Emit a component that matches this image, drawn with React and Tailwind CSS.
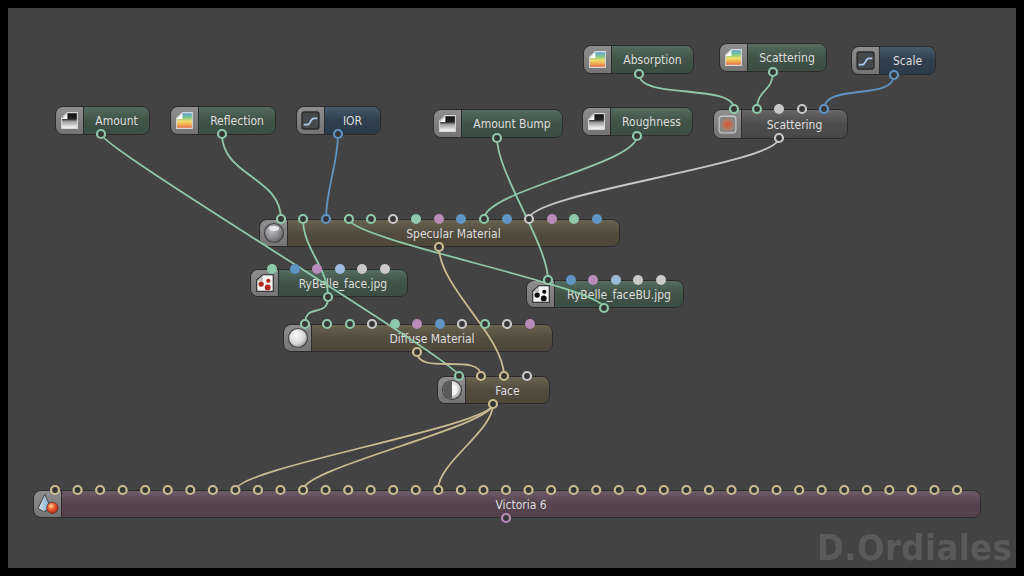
const bodies = {
  green: "bg-gradient-to-b from-[#566c60] via-[#3f5347] via-50% to-[#3c4e44]",
  blue: "bg-gradient-to-b from-[#465a6b] via-[#2f3f4e] via-50% to-[#2c3b48]",
  brown: "bg-gradient-to-b from-[#68634f] via-[#514c3e] via-50% to-[#4c4739]",
  gray: "bg-gradient-to-b from-[#666666] via-[#4d4d4d] via-50% to-[#484848]",
  mauve: "bg-gradient-to-b from-[#6d5b67] via-[#55424c] via-50% to-[#54414b]",
};

const nodes = [
  { label: "Amount", x: 55, y: 106, w: 95, h: 29, color: "green", icon: "gray" },
  { label: "Reflection", x: 170, y: 106, w: 106, h: 29, color: "green", icon: "rainbow" },
  { label: "IOR", x: 296, y: 106, w: 85, h: 29, color: "blue", icon: "curve" },
  { label: "Absorption", x: 583, y: 45, w: 111, h: 29, color: "green", icon: "rainbow" },
  { label: "Scattering", x: 719, y: 43, w: 108, h: 29, color: "green", icon: "rainbow" },
  { label: "Scale", x: 851, y: 46, w: 85, h: 29, color: "blue", icon: "curve" },
  { label: "Amount Bump", x: 433, y: 109, w: 130, h: 29, color: "green", icon: "gray" },
  { label: "Roughness", x: 582, y: 107, w: 111, h: 29, color: "green", icon: "gray" },
  { label: "Scattering", x: 713, y: 109, w: 135, h: 30, color: "gray", icon: "volume" },
  { label: "Specular Material", x: 259, y: 219, w: 361, h: 28, color: "brown", icon: "glossy" },
  { label: "RyBelle_face.jpg", x: 250, y: 269, w: 158, h: 28, color: "green", icon: "redmap" },
  { label: "RyBelle_faceBU.jpg", x: 526, y: 280, w: 158, h: 28, color: "green", icon: "blackmap" },
  { label: "Diffuse Material", x: 283, y: 324, w: 270, h: 28, color: "brown", icon: "diffuse" },
  { label: "Face", x: 437, y: 376, w: 113, h: 28, color: "brown", icon: "mix" },
  { label: "Victoria 6", x: 33, y: 490, w: 948, h: 28, color: "mauve", icon: "figure" },
];

const colors = {
  g: "#8fc9a9",
  b: "#5f94c4",
  p: "#b98bb9",
  l: "#9dbbdd",
  w: "#c9c9c9",
  t: "#cbbd90",
};

// [x, y, colour, filled]
const ring = (y, list) => list.map(([x, c]) => [x, y, c, false]);
const dot = (y, list) => list.map(([x, c]) => [x, y, c, true]);

const victoriaPorts = Array.from({ length: 41 }, (_, i) => [55 + i * 22.55, 490, "t", false]);

const ports = [
  ...ring(134, [[101, "g"], [222, "g"], [338, "b"]]),
  ...ring(74, [[639, "g"]]),
  ...ring(72, [[773, "g"]]),
  ...ring(75, [[894, "b"]]),
  ...ring(138, [[497, "g"], [779, "w"]]),
  ...ring(136, [[637, "g"]]),
  ...ring(109, [[734, "g"], [757, "g"], [802, "w"], [824, "b"]]),
  ...dot(109, [[779, "w"]]),
  ...ring(219, [[281, "g"], [303, "g"], [326, "b"], [349, "g"], [371, "g"], [393, "w"], [484, "g"], [529, "w"]]),
  ...dot(219, [[416, "g"], [439, "p"], [461, "b"], [507, "b"], [552, "p"], [574, "g"], [597, "b"]]),
  ...ring(247, [[439, "t"]]),
  ...dot(269, [[272, "g"], [295, "b"], [317, "p"], [340, "l"], [362, "w"], [385, "w"]]),
  ...ring(297, [[328, "g"]]),
  ...ring(280, [[548, "g"]]),
  ...dot(280, [[571, "b"], [593, "p"], [616, "l"], [638, "w"], [661, "w"]]),
  ...ring(308, [[604, "g"]]),
  ...ring(324, [[305, "g"], [327, "g"], [350, "g"], [372, "w"], [462, "w"], [485, "g"], [507, "w"]]),
  ...dot(324, [[395, "g"], [417, "p"], [440, "b"], [530, "p"]]),
  ...ring(352, [[417, "t"]]),
  ...ring(376, [[459, "g"], [481, "t"], [504, "t"], [527, "w"]]),
  ...ring(404, [[493, "t"]]),
  ...victoriaPorts,
  ...ring(518, [[506, "p"]]),
];

// [x1, y1, x2, y2, colour, bend]
const wires = [
  [101, 134, 459, 376, "g", 14],
  [222, 134, 281, 219, "g", 42],
  [338, 134, 326, 219, "b", 30],
  [497, 138, 548, 280, "g", 35],
  [637, 136, 484, 219, "g", 28],
  [779, 138, 529, 219, "w", 26],
  [639, 74, 734, 109, "g", 26],
  [773, 72, 757, 109, "g", 20],
  [894, 75, 824, 109, "b", 26],
  [303, 219, 328, 297, "g", 30],
  [328, 297, 305, 324, "g", 22],
  [349, 219, 604, 308, "g", 20],
  [417, 352, 481, 376, "t", 24],
  [439, 247, 504, 376, "t", 40],
  [493, 404, 236, 490, "t", 22],
  [493, 404, 303, 490, "t", 22],
  [493, 404, 438, 490, "t", 28],
];

function Paper({ id, stops }) {
  return (
    <svg width="21" height="21" viewBox="0 0 20 20">
      <defs>
        <linearGradient id={id} x1="0" y1="0" x2="0" y2="1">
          {stops.map(([o, c]) => (
            <stop key={o} offset={o} stopColor={c} />
          ))}
        </linearGradient>
      </defs>
      <path d="M2.5 7.5 8 2.5h9.5v15h-15z" fill={`url(#${id})`} stroke="#d8d8d8" strokeWidth="1" />
      <path d="M2.5 8.5 8 3v5.5z" fill="#fff" />
    </svg>
  );
}

function NodeIcon({ type }) {
  if (type === "gray") {
    return <Paper id="paper-gray" stops={[[0, "#111"], [0.4, "#222"], [0.55, "#999"], [1, "#fff"]]} />;
  }
  if (type === "rainbow") {
    return <Paper id="paper-rainbow" stops={[[0, "#5d9fe0"], [0.3, "#7cc58a"], [0.55, "#efe06a"], [0.8, "#f0a04e"], [1, "#e8604a"]]} />;
  }
  if (type === "curve") {
    return (
      <svg width="21" height="21" viewBox="0 0 20 20">
        <rect x="2" y="2" width="16" height="16" rx="2" fill="#45494c" stroke="#2a2a2a" strokeWidth="1.4" />
        <path d="M3.5 14H7c3 0 3-6 6-6h3.5" fill="none" stroke="#a9c8ec" strokeWidth="1.6" />
      </svg>
    );
  }
  if (type === "volume") {
    return (
      <svg width="21" height="21" viewBox="0 0 20 20">
        <defs>
          <radialGradient id="volume-ball" cx="0.5" cy="0.5" r="0.5">
            <stop offset="0" stopColor="#d2542c" />
            <stop offset="0.7" stopColor="#b07a63" />
            <stop offset="1" stopColor="#868686" />
          </radialGradient>
        </defs>
        <rect x="2" y="2" width="16" height="16" rx="3" fill="#868686" stroke="#cfcfcf" strokeWidth="1" />
        <circle cx="10" cy="10" r="6.5" fill="url(#volume-ball)" />
      </svg>
    );
  }
  if (type === "glossy" || type === "diffuse" || type === "mix") {
    const id = `sphere-${type}`;
    const inner = type === "glossy" ? "#c2c2c6" : "#ffffff";
    const outer = type === "glossy" ? "#5d5d63" : "#8c8c8c";
    return (
      <svg width="22" height="22" viewBox="0 0 22 22">
        <defs>
          <radialGradient id={id} cx="0.4" cy="0.35" r="0.7">
            <stop offset="0" stopColor={inner} />
            <stop offset="0.65" stopColor={type === "glossy" ? "#85858a" : "#d4d4d4"} />
            <stop offset="1" stopColor={outer} />
          </radialGradient>
        </defs>
        <circle cx="11" cy="11" r="9.5" fill={`url(#${id})`} stroke="#444" strokeWidth="1.2" />
        {type === "glossy" && <ellipse cx="11" cy="6.5" rx="5" ry="2.4" fill="#e8e8ea" />}
        {type === "mix" && <path d="M11 2a9 9 0 0 0 0 18z" fill="#5a5a5a" />}
        {type === "mix" && <path d="M11 5.5a5.5 5.5 0 0 1 0 11z" fill="#f5f5f5" />}
      </svg>
    );
  }
  if (type === "redmap" || type === "blackmap") {
    const fill = type === "redmap" ? "#b5261b" : "#0c0c0c";
    return (
      <svg width="22" height="22" viewBox="0 0 20 20">
        <path d="M2.5 7.5 8 2.5h9.5v15h-15z" fill="#f4f4f4" stroke="#222" strokeWidth="1" />
        <path d="M2.5 8.5 8 3v5.5z" fill="#bdbdbd" />
        <circle cx="6.5" cy="11" r="2.4" fill={fill} />
        <circle cx="13" cy="8" r="1.9" fill={fill} />
        <circle cx="12.5" cy="14" r="2.7" fill={fill} />
      </svg>
    );
  }
  return (
    <svg width="24" height="24" viewBox="0 0 22 22">
      <defs>
        <linearGradient id="figure-cone" x1="0" y1="0" x2="1" y2="0">
          <stop offset="0" stopColor="#d9e6f0" />
          <stop offset="1" stopColor="#6f9cc4" />
        </linearGradient>
        <radialGradient id="figure-ball" cx="0.4" cy="0.35" r="0.7">
          <stop offset="0" stopColor="#fbd9a0" />
          <stop offset="0.45" stopColor="#ea5a2d" />
          <stop offset="1" stopColor="#b3201a" />
        </radialGradient>
      </defs>
      <path d="M8 2 14 15 7 18 2 15z" fill="url(#figure-cone)" stroke="#333" strokeWidth="0.8" />
      <circle cx="15" cy="14.5" r="5.2" fill="url(#figure-ball)" stroke="#4a2a20" strokeWidth="0.6" />
    </svg>
  );
}

function GraphNode({ node }) {
  return (
    <div
      className="absolute flex overflow-hidden rounded-lg border border-[#2b2b2b]"
      style={{ left: node.x, top: node.y, width: node.w, height: node.h }}
    >
      <div className="flex w-[28px] shrink-0 items-center justify-center border-r border-[#2b2b2b] bg-gradient-to-b from-[#8e8e8e] to-[#747474]">
        <NodeIcon type={node.icon} />
      </div>
      <div className={`flex flex-1 items-center justify-center pt-px font-['DejaVu_Sans_Condensed','DejaVu_Sans',sans-serif] text-[12px] text-[#dedede] ${bodies[node.color]}`}>
        {node.label}
      </div>
    </div>
  );
}

export default function App() {
  return (
    <div className="relative h-[576px] w-[1024px] overflow-hidden bg-black">
      <div className="absolute inset-2 overflow-hidden bg-[#434343]" />

      <div className="absolute inset-0 blur-[0.35px]">
        {nodes.map((node) => (
          <GraphNode key={`${node.label}-${node.x}`} node={node} />
        ))}

        <svg className="absolute left-0 top-0" width="1024" height="576" viewBox="0 0 1024 576">
          {wires.map(([x1, y1, x2, y2, c, k], i) => (
            <path
              key={i}
              d={`M${x1} ${y1}C${x1} ${y1 + k} ${x2} ${y2 - k} ${x2} ${y2}`}
              fill="none"
              stroke={colors[c]}
              strokeWidth="1.8"
            />
          ))}
          {ports.map(([x, y, c, filled], i) =>
            filled ? (
              <circle key={i} cx={x} cy={y} r="5" fill={colors[c]} />
            ) : (
              <circle key={i} cx={x} cy={y} r="4" fill="#363636" stroke={colors[c]} strokeWidth="2.2" />
            )
          )}
        </svg>

        <div className="absolute left-[817px] top-[526px] font-['DejaVu_Sans_Condensed','DejaVu_Sans',sans-serif] text-[36px] font-bold leading-[44px] tracking-[0.4px] text-[#5a5a5a]">
          D.Ordiales
        </div>
      </div>
    </div>
  );
}
